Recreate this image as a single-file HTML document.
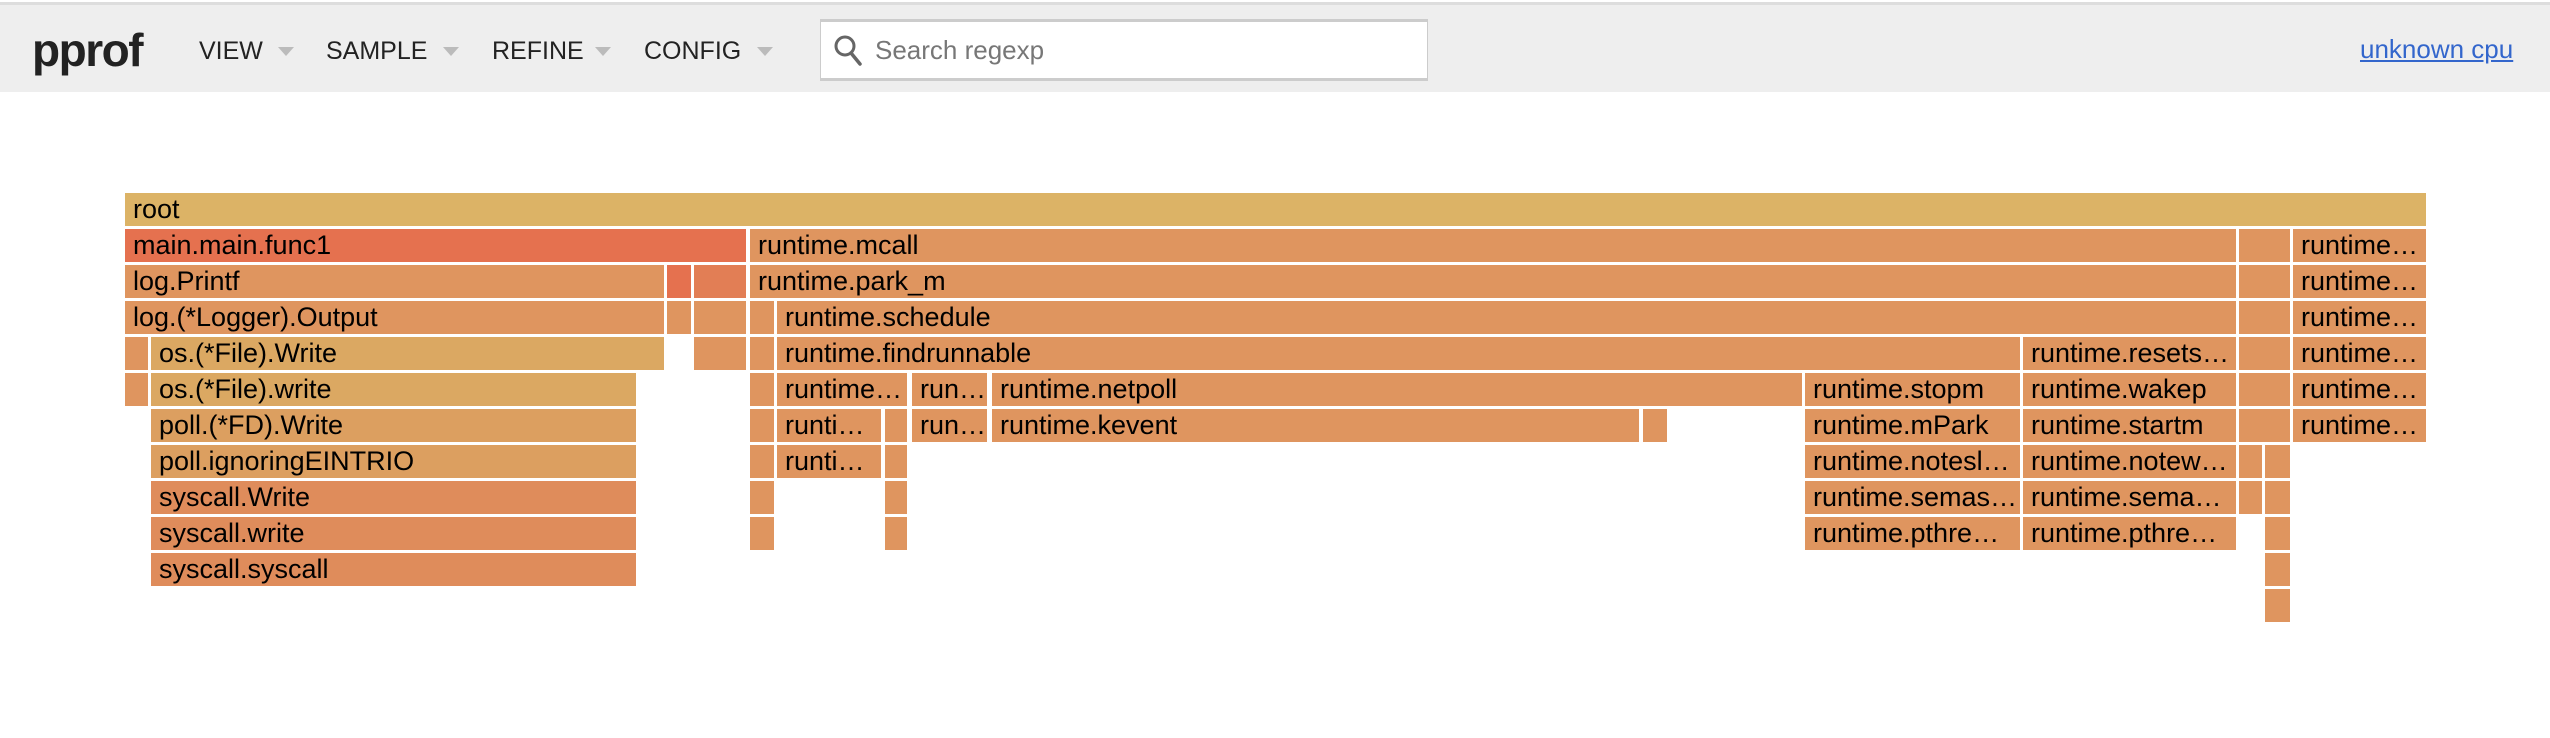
<!DOCTYPE html>
<html><head><meta charset="utf-8"><style>
*{margin:0;padding:0;box-sizing:border-box}
body{width:2550px;height:738px;background:#fff;position:relative;overflow:hidden;font-family:"Liberation Sans",Arial,sans-serif}
#hdr{position:absolute;left:0;top:2px;width:2550px;height:90px;background:#eee;border-top:3px solid #ddd}
.logo{position:absolute;left:32px;top:18px;font-size:46px;font-weight:bold;letter-spacing:-1.5px;color:#222}
.m{position:absolute;top:32px;font-size:25px;color:#222}
.tri{position:absolute;top:42px;width:0;height:0;border-left:8px solid transparent;border-right:8px solid transparent;border-top:9px solid #bbb}
#srch{position:absolute;left:820px;top:14px;width:608px;height:62px;background:#fff;border:1px solid #ccc;border-top:3px solid #ccc;border-bottom:3px solid #ccc}
#srch span{position:absolute;left:54px;top:13px;font-size:26px;color:#777}
.lnk{position:absolute;left:2360px;top:29px;font-size:26px;color:#3366cc;text-decoration:underline}
.b{position:absolute;height:33px;line-height:32px;font-size:27px;color:#000;padding-left:8px;white-space:nowrap;overflow:hidden;background:#df955f}
.y{background:#dcb366}.r{background:#e5714f}.r2{background:#e27e55}.w{background:#dba862}.p{background:#dc9f60}.s{background:#df8c5b}
</style></head><body>
<div id="hdr">
<div class="logo">pprof</div>
<div class="m" style="left:199px">VIEW</div><div class="tri" style="left:278px"></div>
<div class="m" style="left:326px">SAMPLE</div><div class="tri" style="left:443px"></div>
<div class="m" style="left:492px">REFINE</div><div class="tri" style="left:595px"></div>
<div class="m" style="left:644px">CONFIG</div><div class="tri" style="left:757px"></div>
<div id="srch"><svg style="position:absolute;left:12px;top:12px" width="30" height="34" viewBox="0 0 30 34"><circle cx="12" cy="12" r="9" fill="none" stroke="#666" stroke-width="3"/><line x1="18" y1="19" x2="27" y2="30" stroke="#666" stroke-width="3.5" stroke-linecap="round"/></svg><span>Search regexp</span></div>
<div class="lnk">unknown cpu</div>
</div>

<div class="b y" style="left:125px;top:193px;width:2301px">root</div>
<div class="b r" style="left:125px;top:229px;width:621px">main.main.func1</div>
<div class="b" style="left:750px;top:229px;width:1486px">runtime.mcall</div>
<div class="b" style="left:2239px;top:229px;width:51px"></div>
<div class="b" style="left:2293px;top:229px;width:133px">runtime…</div>
<div class="b" style="left:125px;top:265px;width:539px">log.Printf</div>
<div class="b r" style="left:667px;top:265px;width:24px"></div>
<div class="b r2" style="left:694px;top:265px;width:52px"></div>
<div class="b" style="left:750px;top:265px;width:1486px">runtime.park_m</div>
<div class="b" style="left:2239px;top:265px;width:51px"></div>
<div class="b" style="left:2293px;top:265px;width:133px">runtime…</div>
<div class="b" style="left:125px;top:301px;width:539px">log.(*Logger).Output</div>
<div class="b" style="left:667px;top:301px;width:24px"></div>
<div class="b" style="left:694px;top:301px;width:52px"></div>
<div class="b" style="left:750px;top:301px;width:24px"></div>
<div class="b" style="left:777px;top:301px;width:1459px">runtime.schedule</div>
<div class="b" style="left:2239px;top:301px;width:51px"></div>
<div class="b" style="left:2293px;top:301px;width:133px">runtime…</div>
<div class="b" style="left:125px;top:337px;width:23px"></div>
<div class="b w" style="left:151px;top:337px;width:513px">os.(*File).Write</div>
<div class="b" style="left:694px;top:337px;width:52px"></div>
<div class="b" style="left:750px;top:337px;width:24px"></div>
<div class="b" style="left:777px;top:337px;width:1243px">runtime.findrunnable</div>
<div class="b" style="left:2023px;top:337px;width:213px">runtime.resets…</div>
<div class="b" style="left:2239px;top:337px;width:51px"></div>
<div class="b" style="left:2293px;top:337px;width:133px">runtime…</div>
<div class="b" style="left:125px;top:373px;width:23px"></div>
<div class="b w" style="left:151px;top:373px;width:485px">os.(*File).write</div>
<div class="b" style="left:750px;top:373px;width:24px"></div>
<div class="b" style="left:777px;top:373px;width:130px">runtime…</div>
<div class="b" style="left:912px;top:373px;width:75px">run…</div>
<div class="b" style="left:992px;top:373px;width:810px">runtime.netpoll</div>
<div class="b" style="left:1805px;top:373px;width:215px">runtime.stopm</div>
<div class="b" style="left:2023px;top:373px;width:213px">runtime.wakep</div>
<div class="b" style="left:2239px;top:373px;width:51px"></div>
<div class="b" style="left:2293px;top:373px;width:133px">runtime…</div>
<div class="b p" style="left:151px;top:409px;width:485px">poll.(*FD).Write</div>
<div class="b" style="left:750px;top:409px;width:24px"></div>
<div class="b" style="left:777px;top:409px;width:104px">runti…</div>
<div class="b" style="left:885px;top:409px;width:22px"></div>
<div class="b" style="left:912px;top:409px;width:75px">run…</div>
<div class="b" style="left:992px;top:409px;width:647px">runtime.kevent</div>
<div class="b" style="left:1643px;top:409px;width:24px"></div>
<div class="b" style="left:1805px;top:409px;width:215px">runtime.mPark</div>
<div class="b" style="left:2023px;top:409px;width:213px">runtime.startm</div>
<div class="b" style="left:2239px;top:409px;width:51px"></div>
<div class="b" style="left:2293px;top:409px;width:133px">runtime…</div>
<div class="b p" style="left:151px;top:445px;width:485px">poll.ignoringEINTRIO</div>
<div class="b" style="left:750px;top:445px;width:24px"></div>
<div class="b" style="left:777px;top:445px;width:104px">runti…</div>
<div class="b" style="left:885px;top:445px;width:22px"></div>
<div class="b" style="left:1805px;top:445px;width:215px">runtime.notesl…</div>
<div class="b" style="left:2023px;top:445px;width:213px">runtime.notew…</div>
<div class="b" style="left:2239px;top:445px;width:23px"></div>
<div class="b" style="left:2265px;top:445px;width:25px"></div>
<div class="b s" style="left:151px;top:481px;width:485px">syscall.Write</div>
<div class="b" style="left:750px;top:481px;width:24px"></div>
<div class="b" style="left:885px;top:481px;width:22px"></div>
<div class="b" style="left:1805px;top:481px;width:215px">runtime.semas…</div>
<div class="b" style="left:2023px;top:481px;width:213px">runtime.sema…</div>
<div class="b" style="left:2239px;top:481px;width:23px"></div>
<div class="b" style="left:2265px;top:481px;width:25px"></div>
<div class="b s" style="left:151px;top:517px;width:485px">syscall.write</div>
<div class="b" style="left:750px;top:517px;width:24px"></div>
<div class="b" style="left:885px;top:517px;width:22px"></div>
<div class="b" style="left:1805px;top:517px;width:215px">runtime.pthre…</div>
<div class="b" style="left:2023px;top:517px;width:213px">runtime.pthre…</div>
<div class="b" style="left:2265px;top:517px;width:25px"></div>
<div class="b s" style="left:151px;top:553px;width:485px">syscall.syscall</div>
<div class="b" style="left:2265px;top:553px;width:25px"></div>
<div class="b" style="left:2265px;top:589px;width:25px"></div>
</body></html>
